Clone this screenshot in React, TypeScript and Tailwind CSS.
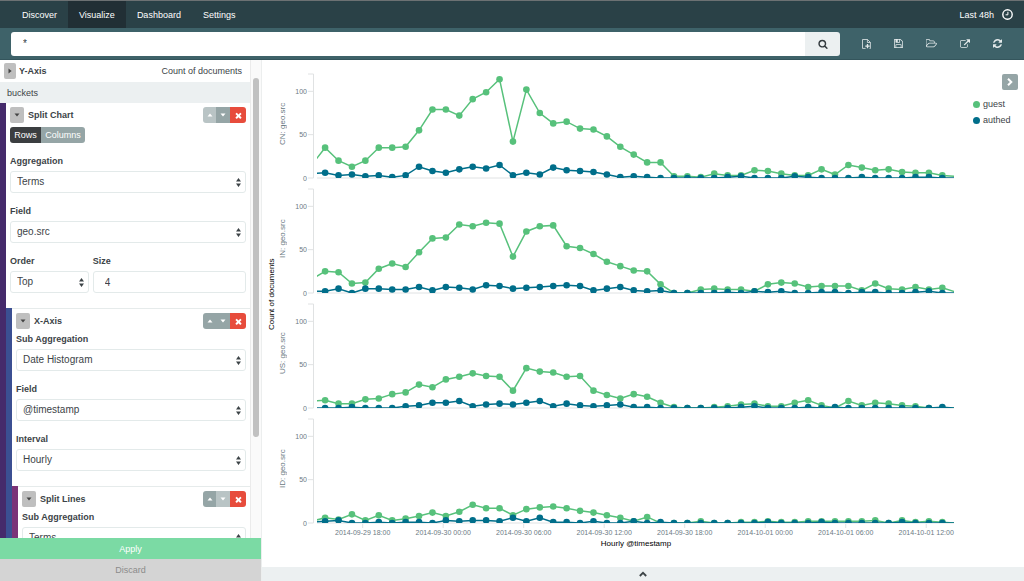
import { useId, useLayoutEffect, useRef, useState } from "react";
import type { ReactNode } from "react";

const GUEST = "#57c17b";
const AUTHED = "#006e8a";
const Y_MAX = 120;
const HOURS = 47.4;
const FIRST_HOUR = 0.53;

type Split = { name: string; guest: number[]; authed: number[] };

/* Hourly counts. The first and last entries lie just outside the visible time range. */
const splits: Split[] = [
  {
    name: "CN: geo.src",
    guest: [15, 35, 20, 13, 20, 35, 35, 36, 55, 79, 79, 72, 91, 99, 114, 42, 102, 75, 63, 65, 57, 56, 48, 36, 27, 18, 18, 2, 2, 1, 5, 3, 3, 9, 8, 5, 3, 3, 10, 4, 15, 12, 9, 10, 7, 6, 6, 3, 2],
    authed: [5, 6, 3, 4, 2, 3, 1, 3, 13, 8, 6, 10, 13, 11, 15, 3, 6, 4, 12, 9, 8, 7, 4, 1, 2, 1, 0, 0, 0, 0, 0, 1, 2, 0, 0, 0, 2, 1, 0, 0, 0, 1, 0, 0, 0, 1, 1, 0, 0],
  },
  {
    name: "IN: geo.src",
    guest: [16, 25, 24, 11, 12, 28, 34, 30, 47, 63, 64, 79, 77, 81, 80, 42, 71, 77, 78, 54, 52, 45, 36, 31, 26, 25, 10, 0, 0, 4, 5, 4, 4, 2, 10, 12, 11, 7, 8, 8, 8, 3, 11, 5, 4, 7, 4, 6, 1],
    authed: [2, 2, 5, 0, 5, 5, 4, 4, 7, 3, 7, 6, 4, 9, 8, 5, 6, 7, 8, 9, 8, 3, 5, 7, 3, 2, 3, 0, 0, 0, 0, 1, 0, 2, 1, 2, 0, 0, 1, 1, 0, 1, 1, 0, 0, 1, 2, 0, 0],
  },
  {
    name: "US: geo.src",
    guest: [8, 9, 5, 5, 10, 11, 16, 18, 27, 24, 33, 36, 40, 37, 36, 20, 46, 42, 41, 36, 37, 20, 15, 11, 16, 13, 6, 1, 0, 0, 1, 2, 4, 5, 2, 2, 6, 9, 3, 0, 8, 3, 6, 5, 3, 2, 0, 0, 0],
    authed: [0, 0, 0, 1, 0, 0, 0, 2, 3, 6, 6, 8, 2, 4, 5, 4, 6, 8, 2, 5, 3, 2, 3, 4, 1, 1, 0, 0, 0, 0, 0, 0, 1, 2, 0, 0, 0, 1, 0, 1, 0, 0, 0, 0, 0, 0, 0, 1, 0],
  },
  {
    name: "ID: geo.src",
    guest: [2, 6, 4, 10, 3, 9, 3, 5, 8, 12, 8, 13, 21, 17, 17, 9, 16, 18, 19, 17, 14, 12, 9, 6, 2, 7, 0, 0, 0, 2, 0, 0, 1, 1, 2, 1, 1, 2, 2, 2, 2, 2, 3, 0, 3, 1, 2, 1, 0],
    authed: [1, 2, 3, 0, 0, 1, 0, 1, 1, 0, 3, 2, 3, 3, 2, 6, 2, 6, 1, 1, 0, 2, 0, 0, 2, 0, 1, 0, 0, 0, 0, 0, 0, 0, 1, 0, 0, 0, 1, 0, 0, 0, 0, 0, 1, 0, 0, 0, 0],
  },
];

const timeTicks = [
  "2014-09-29 18:00",
  "2014-09-30 00:00",
  "2014-09-30 06:00",
  "2014-09-30 12:00",
  "2014-09-30 18:00",
  "2014-10-01 00:00",
  "2014-10-01 06:00",
  "2014-10-01 12:00",
];

const PLOT_LEFT = 30;
const PLOT_TOP = 10;

function useSize(width: number, height: number) {
  const ref = useRef<HTMLDivElement>(null);
  const [size, setSize] = useState({ width, height });
  useLayoutEffect(() => {
    const node = ref.current;
    if (!node) return;
    const measure = () => setSize({ width: node.clientWidth, height: node.clientHeight });
    measure();
    const observer = new ResizeObserver(measure);
    observer.observe(node);
    return () => observer.disconnect();
  }, []);
  return { ref, ...size };
}

const hourToX = (hour: number, width: number) =>
  PLOT_LEFT + ((hour + FIRST_HOUR) / HOURS) * (width - PLOT_LEFT);

function LineChart({ split }: { split: Split }) {
  const { ref, width, height } = useSize(666, 115);
  const clip = useId();
  const base = height - 1;
  const y = (v: number) => base - (v / Y_MAX) * (base - PLOT_TOP);
  const series = [
    { key: "guest", color: GUEST, values: split.guest },
    { key: "authed", color: AUTHED, values: split.authed },
  ];
  return (
    <div ref={ref} className="min-h-0 min-w-0 flex-1">
      <svg width={width} height={height} className="block overflow-visible" role="img" aria-label={split.name}>
        <clipPath id={clip}>
          <rect x={PLOT_LEFT - 1} y={0} width={width - PLOT_LEFT + 1} height={base} />
        </clipPath>
        <path
          d={`M20 ${y(120)}H25.5V${base}H20M20 ${y(100)}H25.5M20 ${y(50)}H25.5M${PLOT_LEFT - 1} ${base}H${width}`}
          fill="none"
          stroke="#e0e2e3"
        />
        {[0, 50, 100].map((v) => (
          <text key={v} x={19} y={y(v) + 2.5} textAnchor="end" fontSize={7} fill="#6b7a83">
            {v}
          </text>
        ))}
        <g clipPath={`url(#${clip})`}>
          {series.map((s) => (
            <g key={s.key} fill={s.color}>
              <polyline
                points={s.values.map((v, i) => `${hourToX(i - 1, width)},${y(v)}`).join(" ")}
                fill="none"
                stroke={s.color}
                strokeWidth={1.5}
              />
              {s.values.slice(1, -1).map((v, i) => (
                <circle key={i} cx={hourToX(i, width)} cy={y(v)} r={3.3} />
              ))}
            </g>
          ))}
        </g>
      </svg>
    </div>
  );
}

function TimeAxis() {
  const { ref, width } = useSize(666, 14);
  return (
    <div ref={ref} className="h-3.5 w-full">
      <svg width={width} height={14} className="block overflow-visible">
        {timeTicks.map((label, i) => {
          const x = hourToX(2.8 + i * 6, width);
          return (
            <g key={label}>
              <path d={`M${x} 0V4`} stroke="#e0e2e3" />
              <text x={x} y={11} textAnchor="middle" fontSize={7} fill="#6b7a83">
                {label}
              </text>
            </g>
          );
        })}
      </svg>
    </div>
  );
}

function Glyph({ d, className, box = "0 0 1792 1792" }: { d: string; className: string; box?: string }) {
  return (
    <svg viewBox={box} className={className} fill="currentColor" aria-hidden="true">
      <path d={d} />
    </svg>
  );
}

const SAVE =
  "M512 1536h768v-384h-768v384zm896 0h128v-896q0-14-10-38.5t-20-34.5l-281-281q-10-10-34-20t-39-10v416q0 40-28 68t-68 28h-576q-40 0-68-28t-28-68v-416h-128v1280h128v-416q0-40 28-68t68-28h832q40 0 68 28t28 68v416zm-384-928v-320q0-13-9.5-22.5t-22.5-9.5h-192q-13 0-22.5 9.5t-9.5 22.5v320q0 13 9.5 22.5t22.5 9.5h192q13 0 22.5-9.5t9.5-22.5zm640 32v928q0 40-28 68t-68 28h-1344q-40 0-68-28t-28-68v-1344q0-40 28-68t68-28h928q40 0 88 20t76 48l280 280q28 28 48 76t20 88z";
const FOLDER =
  "M1717 931q0-35-53-35h-1088q-40 0-85.5 21.5t-71.5 52.5l-294 363q-18 24-18 40 0 35 53 35h1088q40 0 86-22t71-53l294-363q18-22 18-39zm-1141-163h768v-160q0-40-28-68t-68-28h-576q-40 0-68-28t-28-68v-64q0-40-28-68t-68-28h-320q-40 0-68 28t-28 68v853l256-315q44-53 116-87.5t140-34.5zm1269 163q0 62-46 120l-295 363q-43 53-116 87.5t-140 34.5h-1088q-92 0-158-66t-66-158v-960q0-92 66-158t158-66h320q92 0 158 66t66 158v32h544q92 0 158 66t66 158v160h192q54 0 99 24.5t67 70.5q15 32 15 68z";
const SHARE =
  "M1408 928v320q0 119-84.5 203.5t-203.5 84.5h-832q-119 0-203.5-84.5t-84.5-203.5v-832q0-119 84.5-203.5t203.5-84.5h704q14 0 23 9t9 23v64q0 14-9 23t-23 9h-704q-66 0-113 47t-47 113v832q0 66 47 113t113 47h832q66 0 113-47t47-113v-320q0-14 9-23t23-9h64q14 0 23 9t9 23zm384-864v512q0 26-19 45t-45 19-45-19l-176-176-652 652q-10 10-23 10t-23-10l-114-114q-10-10-10-23t10-23l652-652-176-176q-19-19-19-45t19-45 45-19h512q26 0 45 19t19 45z";
const REFRESH =
  "M1639 1056q0 5-1 7-64 268-268 434.5t-478 166.5q-146 0-282.5-55t-243.5-157l-129 129q-19 19-45 19t-45-19-19-45v-448q0-26 19-45t45-19h448q26 0 45 19t19 45-19 45l-137 137q71 66 161 102t187 36q134 0 250-65t186-179q11-17 53-117 8-23 30-23h192q13 0 22.5 9.5t9.5 22.5zm25-800v448q0 26-19 45t-45 19h-448q-26 0-45-19t-19-45 19-45l138-138q-148-137-349-137-134 0-250 65t-186 179q-11 17-53 117-8 23-30 23h-199q-13 0-22.5-9.5t-9.5-22.5v-7q65-268 270-434.5t480-166.5q146 0 284 55.5t245 156.5l130-129q19-19 45-19t45 19 19 45z";
const SEARCH =
  "M1216 832q0-185-131.5-316.5t-316.5-131.5-316.5 131.5-131.5 316.5 131.5 316.5 316.5 131.5 316.5-131.5 131.5-316.5zm512 832q0 52-38 90t-90 38q-54 0-90-38l-343-342q-179 124-399 124-143 0-273.5-55.5t-225-150-150-225-55.5-273.5 55.5-273.5 150-225 225-150 273.5-55.5 273.5 55.5 225 150 150 225 55.5 273.5q0 220-124 399l343 343q37 37 37 90z";
const TIMES =
  "M1490 1322q0 40-28 68l-136 136q-28 28-68 28t-68-28l-294-294-294 294q-28 28-68 28t-68-28l-136-136q-28-28-28-68t28-68l294-294-294-294q-28-28-28-68t28-68l136-136q28-28 68-28t68 28l294 294 294-294q28-28 68-28t68 28l136 136q28 28 28 68t-28 68l-294 294 294 294q28 28 28 68z";

function Navbar() {
  const tab = "flex items-center px-[11px]";
  return (
    <nav className="flex h-7 shrink-0 items-stretch border-t border-[#6c7173] bg-[#2a4147] pl-[11px] text-white">
      <a href="#discover" className={tab}>Discover</a>
      <a href="#visualize" className="flex items-center bg-[#212f35] px-[11px]" aria-current="page">Visualize</a>
      <a href="#dashboard" className={tab}>Dashboard</a>
      <a href="#settings" className={tab}>Settings</a>
      <button type="button" className="ml-auto flex items-center gap-2 pr-[11px]">
        Last 48h
        <svg viewBox="0 0 11 11" className="size-[11px]" fill="none" stroke="currentColor" aria-hidden="true">
          <circle cx="5.5" cy="5.5" r="4.7" strokeWidth="1.4" />
          <path d="M5.9 2.8v3H3.6" strokeWidth="1" />
        </svg>
      </button>
    </nav>
  );
}

function QueryBar() {
  return (
    <div className="flex h-8 shrink-0 items-center border-b border-[#34555c] bg-[#3e6269] pl-[11px]">
      <form className="flex h-6 flex-1" onSubmit={(e) => e.preventDefault()}>
        <input
          type="text"
          aria-label="Query"
          defaultValue="*"
          className="h-6 min-w-0 flex-1 rounded-l-[3px] bg-white px-3 text-[10px] text-[#2d3b41] outline-none"
        />
        <button type="submit" aria-label="Search" className="flex w-[35px] items-center justify-center rounded-r-[3px] bg-[#ecf0f1] text-[#343b3f]">
          <Glyph d={SEARCH} className="size-2.5" />
        </button>
      </form>
      <div className="ml-[22px] flex items-center gap-[23px] pr-[22px] text-[#e4eaeb]">
        <button type="button" aria-label="New visualization">
          <svg viewBox="0 0 9 10" className="h-2.5 w-[9px]" fill="none" stroke="currentColor" aria-hidden="true">
            <path d="M3.6 9.4H.5V.5h5l2.9 2.9v6.1H7.6M5.4.5v3h3" strokeWidth=".8" />
            <path d="M5.5 4.9v4.4M3.3 7.1h4.4" strokeWidth="1.3" />
          </svg>
        </button>
        <button type="button" aria-label="Save"><Glyph d={SAVE} box="128 128 1536 1536" className="size-[9px]" /></button>
        <button type="button" aria-label="Open"><Glyph d={FOLDER} box="0 128 1856 1536" className="h-[9px] w-[11px]" /></button>
        <button type="button" aria-label="Share"><Glyph d={SHARE} box="0 0 1792 1536" className="h-[9px] w-2.5" /></button>
        <button type="button" aria-label="Refresh"><Glyph d={REFRESH} box="128 128 1536 1536" className="size-[9px]" /></button>
      </div>
    </div>
  );
}

function Toggle({ open, label }: { open: boolean; label: string }) {
  return (
    <button
      type="button"
      aria-label={label}
      aria-expanded={open}
      className={
        open
          ? "flex h-4 w-3.5 items-center justify-center rounded-[2px] bg-[#bfbfbf] text-[#444]"
          : "flex h-4 w-3 items-center justify-center rounded-[2px] bg-[#bfbfbf] text-[#444]"
      }
    >
      <svg viewBox="0 0 6 6" className="size-1.5" fill="currentColor" aria-hidden="true">
        {open ? <path d="M.5 1.5h5L3 4.5z" /> : <path d="M1.5.5v5L4.7 3z" />}
      </svg>
    </button>
  );
}

function GroupHeader({ title, upOff, downOff }: { title: string; upOff?: boolean; downOff?: boolean }) {
  return (
    <div className="flex h-4 items-center">
      <Toggle open label={`Collapse ${title}`} />
      <h3 className="ml-1 font-bold">{title}</h3>
      <div className="ml-auto flex h-4 overflow-hidden rounded-[3px] text-white">
        <button type="button" aria-label="Move up" disabled={upOff} className="flex w-[13px] items-center justify-center bg-[#95a5a6] disabled:bg-[#b9c4c5]">
          <svg viewBox="0 0 6 6" className="size-1.5" fill="currentColor" aria-hidden="true"><path d="M.5 4.5h5L3 1.5z" /></svg>
        </button>
        <button type="button" aria-label="Move down" disabled={downOff} className="flex w-3.5 items-center justify-center bg-[#95a5a6] disabled:bg-[#b9c4c5]">
          <svg viewBox="0 0 6 6" className="size-1.5" fill="currentColor" aria-hidden="true"><path d="M.5 1.5h5L3 4.5z" /></svg>
        </button>
        <button type="button" aria-label="Remove" className="flex w-4 items-center justify-center bg-[#e74c3c]">
          <Glyph d={TIMES} className="size-[9px]" />
        </button>
      </div>
    </div>
  );
}

function Field({ label, children, className }: { label: string; children: ReactNode; className: string }) {
  return (
    <label className={`block ${className}`}>
      <span className="mb-1 block h-3 font-bold leading-3">{label}</span>
      {children}
    </label>
  );
}

function Select({ value }: { value: string }) {
  return (
    <span className="relative block">
      <select defaultValue={value} className="block h-[22px] w-full appearance-none rounded-[3px] border border-[#e3eaea] bg-white px-1.5 text-[10px] text-[#3c4347] outline-none">
        <option>{value}</option>
      </select>
      <svg viewBox="0 0 5 9" className="pointer-events-none absolute right-[5px] top-[7px] h-[9px] w-[5px]" fill="#3c4347" aria-hidden="true">
        <path d="M0 3.6h5L2.5 0zM0 5.4h5L2.5 9z" />
      </svg>
    </span>
  );
}

function Sidebar() {
  return (
    <aside className="flex w-[262px] shrink-0 flex-col border-r border-[#eceeee]">
      <div className="flex min-h-0 flex-1">
        <div className="min-w-0 flex-1 overflow-hidden">
          <div className="flex h-[22px] items-center pl-1 pr-2">
            <Toggle open={false} label="Expand Y-Axis" />
            <h3 className="ml-[3px] font-bold">Y-Axis</h3>
            <span className="ml-auto">Count of documents</span>
          </div>
          <h2 className="flex h-[21px] items-center bg-[#ecf0f1] pl-[7px]">buckets</h2>
          <section className="border-l-[6px] border-[#452a6b]">
            <div className="px-1 pb-[15px] pt-1">
              <GroupHeader title="Split Chart" upOff />
              <div className="mt-1 flex h-4 w-fit overflow-hidden rounded-[3px] text-white">
                <button type="button" aria-pressed="true" className="w-[31px] bg-[#3b3e40]">Rows</button>
                <button type="button" aria-pressed="false" className="w-11 bg-[#95a5a6]">Columns</button>
              </div>
              <Field label="Aggregation" className="mt-3"><Select value="Terms" /></Field>
              <Field label="Field" className="mt-3"><Select value="geo.src" /></Field>
              <div className="mt-3 flex gap-1">
                <Field label="Order" className="w-1/3"><Select value="Top" /></Field>
                <Field label="Size" className="flex-1">
                  <input type="text" defaultValue="4" className="block h-[22px] w-full rounded-[3px] border border-[#e3eaea] bg-white px-[11px] text-[10px] text-[#3c4347] outline-none" />
                </Field>
              </div>
            </div>
            <section className="border-l-[6px] border-[#3b4f92]">
              <div className="border-t border-[#e6ebeb] px-1 pb-[15px] pt-1">
                <GroupHeader title="X-Axis" />
                <Field label="Sub Aggregation" className="mt-1"><Select value="Date Histogram" /></Field>
                <Field label="Field" className="mt-3"><Select value="@timestamp" /></Field>
                <Field label="Interval" className="mt-3"><Select value="Hourly" /></Field>
              </div>
              <section className="border-l-[6px] border-[#7b3378]">
                <div className="border-t border-[#e6ebeb] px-1 pb-[15px] pt-1">
                  <GroupHeader title="Split Lines" downOff />
                  <Field label="Sub Aggregation" className="mt-1"><Select value="Terms" /></Field>
                </div>
              </section>
            </section>
          </section>
        </div>
        <div className="flex w-[11px] shrink-0 flex-col items-center border-l border-[#ebebeb] bg-[#fafafa] pt-[18px]">
          <div className="h-[78%] w-1.5 rounded-full bg-[#c1c1c1]" />
        </div>
      </div>
      <button type="button" className="h-[21px] shrink-0 bg-[#7bdaa4] text-white">Apply</button>
      <button type="button" className="h-[22px] shrink-0 bg-[#d4d4d4] text-[#8b8b8b]">Discard</button>
    </aside>
  );
}

function Visualization() {
  const vertical = "flex items-center justify-center rotate-180 whitespace-nowrap text-[8px] leading-[11px] [writing-mode:vertical-rl]";
  return (
    <main className="flex min-w-0 flex-1 flex-col">
      <div className="flex min-h-0 flex-1 pl-1 pt-1">
        <div className="flex min-w-0 flex-1 flex-col pb-[18px]">
          <div className="flex min-h-0 flex-1">
            <div className={`w-[11px] text-black ${vertical}`}>Count of documents</div>
            <div className="flex min-w-0 flex-1 flex-col">
              {splits.map((split) => (
                <div key={split.name} className="flex min-h-0 flex-1">
                  <div className={`w-[11px] pb-1 text-[#6b7a83] ${vertical}`}>{split.name}</div>
                  <LineChart split={split} />
                </div>
              ))}
            </div>
          </div>
          <div className="pl-[22px]">
            <TimeAxis />
            <div className="h-[11px] pl-[30px] text-center text-[8px] leading-[11px] text-black">Hourly @timestamp</div>
          </div>
        </div>
        <div className="flex w-[70px] shrink-0 flex-col pl-[19px] pr-1.5 pt-2.5">
          <button type="button" aria-label="Toggle legend" className="flex size-4 items-center justify-center self-end rounded-[2px] bg-[#95a5a6] text-white">
            <svg viewBox="0 0 8 8" className="size-2" fill="none" stroke="currentColor" strokeWidth="2" aria-hidden="true"><path d="M2 .8 5.3 4 2 7.2" /></svg>
          </button>
          <ul className="mt-1.5">
            <li className="flex h-4 items-center gap-[3px]"><span className="size-[7px] rounded-full bg-[#57c17b]" />guest</li>
            <li className="flex h-4 items-center gap-[3px]"><span className="size-[7px] rounded-full bg-[#006e8a]" />authed</li>
          </ul>
        </div>
      </div>
      <button type="button" aria-label="Show table" className="flex h-3.5 shrink-0 items-center justify-center bg-[#ecf0f1] text-[#3d4447]">
        <svg viewBox="0 0 8 6" className="h-1.5 w-2" fill="none" stroke="currentColor" strokeWidth="1.8" aria-hidden="true"><path d="M.8 5 4 1.8 7.2 5" /></svg>
      </button>
    </main>
  );
}

export default function App() {
  return (
    <div className="flex h-screen flex-col overflow-hidden bg-white font-['Liberation_Sans',Arial,sans-serif] text-[9px] leading-3 text-[#3c4347]">
      <Navbar />
      <QueryBar />
      <div className="flex min-h-0 flex-1">
        <Sidebar />
        <Visualization />
      </div>
    </div>
  );
}
